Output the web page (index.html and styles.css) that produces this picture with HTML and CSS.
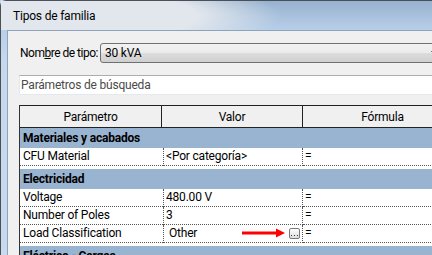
FILE: index.html
```html
<!DOCTYPE html>
<html lang="es">
<head>
    <meta charset="UTF-8">
    <title>Tipos de familia</title>
    <link rel="stylesheet" href="styles.css">
</head>
<body>

    <div class="window">
        <!-- Title bar -->
        <div class="titlebar">Tipos de familia</div>

        <div class="content">
            <div class="type-row">
                <span class="type-label">Nom<u>b</u>re de tipo:</span>
                <div class="combo">
                    <span>30 kVA</span>
                    <span class="combo-arrow"></span>
                </div>
            </div>

            <div class="search">Parámetros de búsqueda</div>

            <!-- Parameter grid -->
            <div class="grid">
                <div class="grid-head">
                    <div class="cell">Parámetro</div>
                    <div class="cell">Valor</div>
                    <div class="cell">Fórmula</div>
                </div>

                <div class="group first">Materiales y acabados</div>
                <div class="row">
                    <div class="cell">CFU Material</div>
                    <div class="cell">&lt;Por categoría&gt;</div>
                    <div class="cell">=</div>
                </div>

                <div class="group">Electricidad</div>
                <div class="row">
                    <div class="cell">Voltage</div>
                    <div class="cell">480.00 V</div>
                    <div class="cell">=</div>
                </div>
                <div class="row">
                    <div class="cell">Number of Poles</div>
                    <div class="cell">3</div>
                    <div class="cell">=</div>
                </div>
                <div class="row">
                    <div class="cell">Load Classification</div>
                    <div class="cell cell-edit">
                        <span>Other</span>
                        <svg class="pointer-arrow" width="43" height="10" viewBox="0 0 43 10">
                            <rect x="0" y="3.5" width="35" height="3" fill="#f00"/>
                            <polygon points="34,0.5 43,5 34,9.5" fill="#f00"/>
                        </svg>
                        <span class="ellipsis-btn">
                            <svg width="9" height="9" viewBox="0 0 9 9">
                                <rect x="1" y="6" width="1" height="1" fill="#333"/>
                                <rect x="4" y="6" width="1" height="1" fill="#333"/>
                                <rect x="7" y="6" width="1" height="1" fill="#333"/>
                            </svg>
                        </span>
                    </div>
                    <div class="cell">=</div>
                </div>

                <div class="group">Eléctrico - Cargas</div>
            </div>
        </div>
    </div>

</body>
</html>
```

FILE: styles.css
```css
html, body {
    width: 432px;
    height: 255px;
}
body {
    margin: 0;
    font-family: Roboto, "Noto Sans", Arial, sans-serif;
    font-size: 12px;
    letter-spacing: -0.2px;
    color: #000;
    background-color: #c5d8ee;
    overflow: hidden;
}
/* Window frame */
.window {
    width: 470px;
    height: 270px;
    border-top: 1px solid #4b5058;
    border-left: 1px solid #4b5058;
    border-top-left-radius: 6px;
    background: linear-gradient(#97b2cf, #b8cfe9 29px, #c5d8ee 60px, #c8daef);
}
.titlebar {
    height: 29px;
    display: flex;
    align-items: center;
    padding-left: 12px;
    color: #000;
    background: radial-gradient(ellipse 210px 40px at 70px 15px, #e2e7ed 0, #e2e7ed 60%, rgba(226, 231, 237, 0) 100%);
}
.content {
    margin-left: 6px;
    height: 240px;
    padding: 12px 0 0 11px;
    background-color: #f0f0f0;
    border-top: 1px solid #8da3bc;
    border-left: 1px solid #8da3bc;
}
.type-row {
    display: flex;
    align-items: center;
    height: 20px;
}
.type-label {
    flex: none;
    width: 80px;
    padding-left: 1px;
    letter-spacing: -0.5px;
    white-space: nowrap;
    overflow: hidden;
}
.combo {
    flex: none;
    width: 340px;
    height: 18px;
    display: flex;
    align-items: center;
    padding-left: 4px;
    border: 1px solid #707070;
    border-radius: 3px;
    background: linear-gradient(#f2f2f2, #ebebeb 50%, #dddddd 50%, #cfcfcf);
}
.combo-arrow {
    margin-left: auto;
    margin-right: 6px;
    width: 0;
    height: 0;
    border-left: 4px solid transparent;
    border-right: 4px solid transparent;
    border-top: 4px solid #000;
}
.search {
    margin-top: 12px;
    width: 430px;
    height: 18px;
    line-height: 18px;
    padding-left: 1px;
    color: #4a4a4a;
    background-color: #fff;
    border: 1px solid #e3e9ef;
    border-top-color: #abadb3;
}
/* Parameter grid */
.grid {
    margin-top: 10px;
    width: 440px;
    background-color: #fff;
    border-left: 1px solid #333;
}
.grid-head {
    display: grid;
    grid-template-columns: 142px 141px 160px;
    height: 21px;
    background-color: #f0f0f0;
    border-top: 1px solid #222;
    border-bottom: 1px solid #222;
}
.grid-head .cell {
    display: flex;
    align-items: center;
    justify-content: center;
    border-right: 1px solid #222;
}
.group {
    height: 20px;
    line-height: 20px;
    margin-top: 3px;
    padding-left: 3px;
    font-weight: bold;
    background-color: #99b4d1;
    white-space: nowrap;
}
.group.first {
    margin-top: 0;
}
.row {
    display: grid;
    grid-template-columns: 143px 140px 160px;
    height: 18px;
}
.row .cell {
    height: 17px;
    line-height: 17px;
    padding-left: 3px;
    border-bottom: 1px dotted #555;
    border-right: 1px dotted #555;
    white-space: nowrap;
}
.row .cell:first-child {
    border-right: none;
}
.row .cell:nth-child(2) {
    border-left: 1px dotted #555;
    padding-left: 2px;
}
.row .cell:nth-child(3) {
    border-right: none;
    padding-left: 2px;
}
.cell-edit {
    position: relative;
    display: flex;
    align-items: center;
}
.cell-edit span:first-child {
    padding-left: 3px;
}
.pointer-arrow {
    position: absolute;
    left: 78px;
    top: 3px;
}
.ellipsis-btn {
    margin-left: auto;
    margin-right: 2px;
    width: 9px;
    height: 9px;
    line-height: 0;
    border: 1px solid #7a7a7a;
    border-radius: 2px;
    background: linear-gradient(#fdfdfd, #dedede);
}
```
